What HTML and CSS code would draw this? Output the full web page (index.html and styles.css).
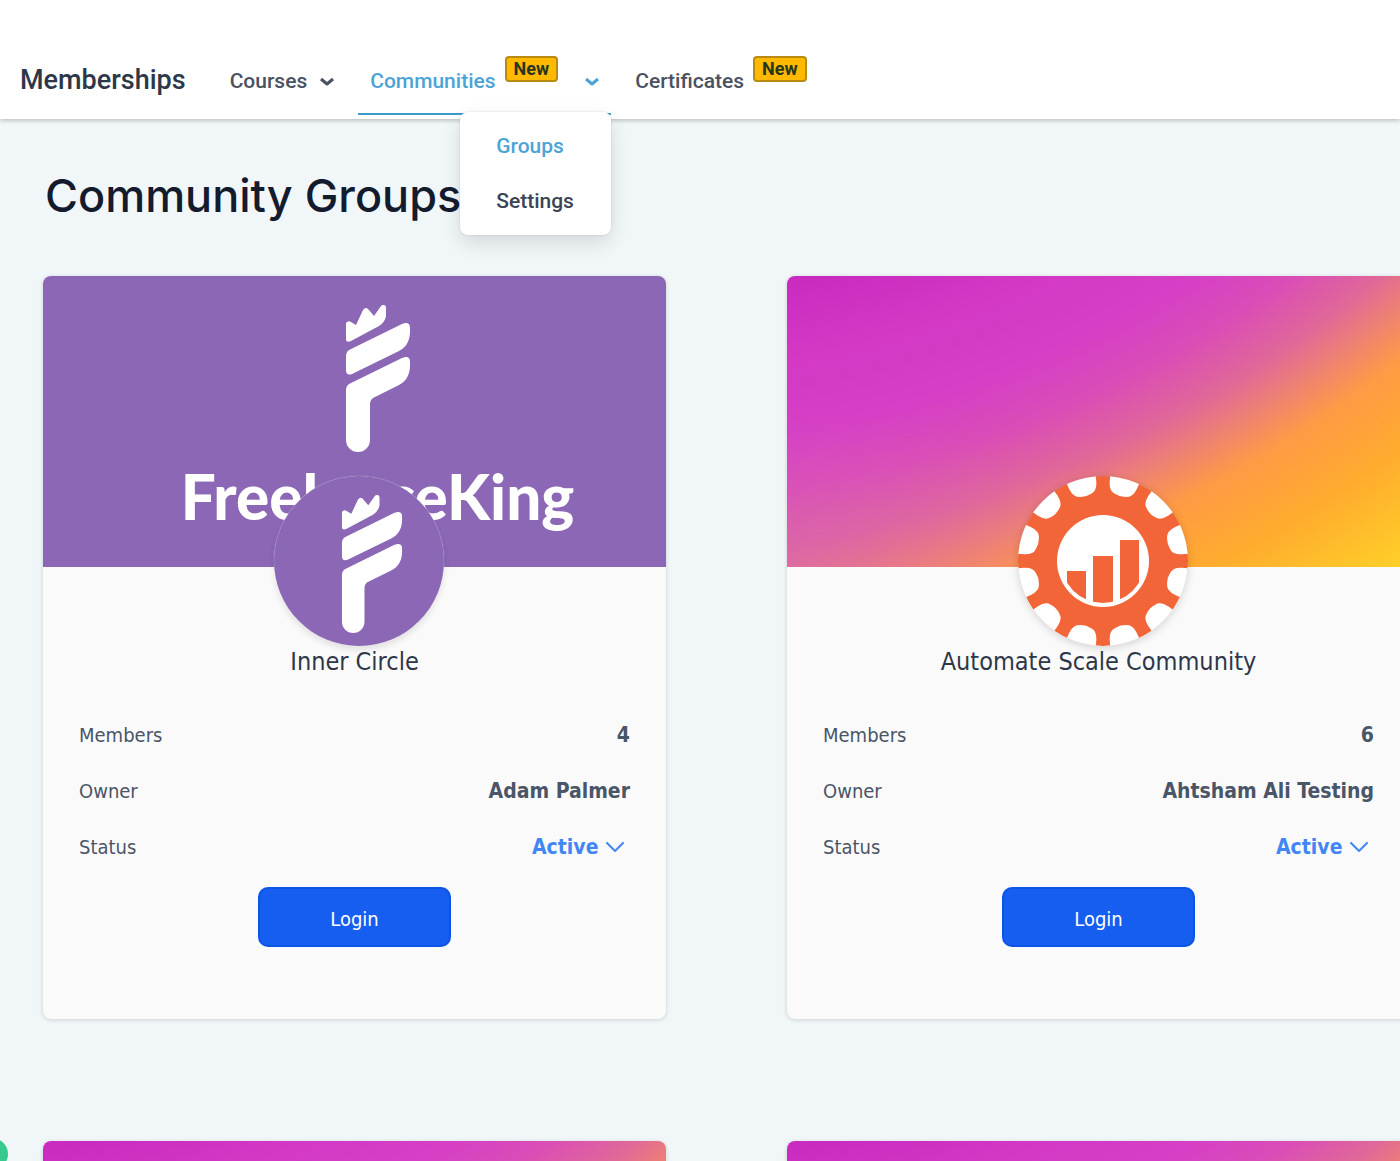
FILE: index.html
```html
<!DOCTYPE html>
<html lang="en">
<head>
<meta charset="utf-8">
<title>Community Groups</title>
<meta name="viewport" content="width=device-width, initial-scale=1">
<link rel="stylesheet" href="styles.css">
</head>
<body>
<svg class="defs" width="0" height="0" aria-hidden="true">
  <symbol id="torch" viewBox="0 0 66 148">
    <path d="M1 18Q3 15 6 17L11 20L18 5Q21 1 24 5L29 11L36 1Q39 -2 41 2V11Q40 17 34 21L6 36Q1 38 1 34Z"/>
    <path d="M1 50Q1 47 4 45L57 19Q65 16 65 23Q66 40 54 46L7 69Q1 71 1 65Z"/>
    <path d="M1 84Q1 81 4 79L57 53Q65 50 65 57Q66 74 54 80L28 93Q25 95 25 98V135A12 12 0 0 1 1 135Z"/>
  </symbol>
  <symbol id="chevron-solid" viewBox="0 0 14 9">
    <path d="M1 2L7 7L13 2" fill="none" stroke="currentColor" stroke-width="3" stroke-linejoin="round"/>
  </symbol>
  <symbol id="chevron-thin" viewBox="0 0 18 11">
    <path d="M1 1L9 9L17 1" fill="none" stroke="currentColor" stroke-width="2" stroke-linecap="round" stroke-linejoin="round"/>
  </symbol>
</svg>

<header class="topbar">
  <a class="brand" href="#">Memberships</a>
  <nav class="nav">
    <a class="nav-item" href="#">Courses
      <svg class="nav-chevron" aria-hidden="true"><use href="#chevron-solid"/></svg>
    </a>
    <div class="nav-group">
      <a class="nav-item nav-item-active" href="#">Communities
        <span class="badge">New</span>
        <svg class="nav-chevron nav-chevron-far" aria-hidden="true"><use href="#chevron-solid"/></svg>
      </a>
      <div class="menu">
        <a class="menu-link menu-link-active" href="#">Groups</a>
        <a class="menu-link" href="#">Settings</a>
      </div>
    </div>
    <a class="nav-item" href="#">Certificates
      <span class="badge">New</span>
    </a>
  </nav>
</header>

<main class="page">
  <h1 class="title">Community Groups</h1>
  <div class="grid">
    <article class="card">
      <div class="banner banner-purple">
        <svg class="banner-mark" aria-hidden="true"><use href="#torch"/></svg>
        <span class="banner-name">FreelanceKing</span>
      </div>
      <div class="avatar avatar-purple">
        <svg class="avatar-mark" aria-hidden="true"><use href="#torch"/></svg>
      </div>
      <div class="card-body">
        <h2 class="card-title">Inner Circle</h2>
        <dl class="facts">
          <div class="fact"><dt>Members</dt><dd>4</dd></div>
          <div class="fact"><dt>Owner</dt><dd>Adam Palmer</dd></div>
          <div class="fact">
            <dt><label for="status-1">Status</label></dt>
            <dd class="status">
              <select id="status-1" class="status-select"><option>Active</option></select>
              <svg class="status-chevron" aria-hidden="true"><use href="#chevron-thin"/></svg>
            </dd>
          </div>
        </dl>
        <button class="login" type="button">Login</button>
      </div>
    </article>

    <article class="card">
      <div class="banner banner-sunset"></div>
      <div class="avatar">
        <svg class="gear" viewBox="-85 -85 170 170" aria-hidden="true">
          <defs>
            <path id="notch" d="M-16 -90L-14 -78Q-12 -69 -6 -68Q0 -66 6 -68Q12 -69 14 -78L16 -90Z"/>
            <clipPath id="dial"><circle r="42"/></clipPath>
          </defs>
          <circle r="85" fill="#f26538"/>
          <g fill="#fff">
            <use href="#notch" transform="rotate(15)"/><use href="#notch" transform="rotate(45)"/>
            <use href="#notch" transform="rotate(75)"/><use href="#notch" transform="rotate(105)"/>
            <use href="#notch" transform="rotate(135)"/><use href="#notch" transform="rotate(165)"/>
            <use href="#notch" transform="rotate(195)"/><use href="#notch" transform="rotate(225)"/>
            <use href="#notch" transform="rotate(255)"/><use href="#notch" transform="rotate(285)"/>
            <use href="#notch" transform="rotate(315)"/><use href="#notch" transform="rotate(345)"/>
            <circle r="46"/>
          </g>
          <g fill="#f26538" clip-path="url(#dial)">
            <path d="M-36 10H-17V50H-36ZM-10 -5H10V50H-10ZM17 -21H36V50H17Z"/>
          </g>
        </svg>
      </div>
      <div class="card-body">
        <h2 class="card-title">Automate Scale Community</h2>
        <dl class="facts">
          <div class="fact"><dt>Members</dt><dd>6</dd></div>
          <div class="fact"><dt>Owner</dt><dd>Ahtsham Ali Testing</dd></div>
          <div class="fact">
            <dt><label for="status-2">Status</label></dt>
            <dd class="status">
              <select id="status-2" class="status-select"><option>Active</option></select>
              <svg class="status-chevron" aria-hidden="true"><use href="#chevron-thin"/></svg>
            </dd>
          </div>
        </dl>
        <button class="login" type="button">Login</button>
      </div>
    </article>

    <article class="card"><div class="banner banner-sunset"></div></article>
    <article class="card"><div class="banner banner-sunset"></div></article>
  </div>
</main>
<button class="chat" type="button" aria-label="Help"></button>
</body>
</html>
```

FILE: styles.css
```css
* { box-sizing: border-box; }

html, body { height: 100%; }

body {
  margin: 0;
  display: flex;
  flex-direction: column;
  overflow: hidden;
  background: #f1f6f9;
  color: #2d3748;
  font-family: "DejaVu Sans Condensed", Tahoma, sans-serif;
}

a { color: inherit; text-decoration: none; }

.defs { position: absolute; }

/* Top bar */
.topbar {
  position: relative;
  z-index: 2;
  flex: none;
  display: flex;
  align-items: stretch;
  gap: 32px;
  padding: 45px 20px 4px;
  background: #fff;
  box-shadow: 0 2px 4px rgba(0, 0, 0, 0.2);
  font-family: Roboto, sans-serif;
  font-weight: 500;
}

.brand {
  font-size: 27px;
  line-height: 70px;
}

.nav { display: flex; gap: 12px; }

.nav-group { position: relative; }

.nav-item {
  display: flex;
  align-items: center;
  height: 70px;
  padding: 4px 12px 0;
  border-bottom: 2px solid transparent;
  color: #4a5160;
  font-size: 21px;
}

.nav-item-active {
  border-color: #3f9bcd;
  color: #4ba3d8;
}

.nav-chevron {
  width: 14px;
  height: 9px;
  margin-left: 13px;
}

.nav-chevron-far { margin-left: 27px; }

.badge {
  margin: 0 0 24px 9px;
  padding: 0 7px;
  border: 2px solid #b88a10;
  border-radius: 4px;
  background: #ffb900;
  color: #26371f;
  font-size: 18px;
  font-weight: 700;
  line-height: 22px;
}

.menu {
  position: absolute;
  top: 67px;
  right: 0;
  display: grid;
  gap: 31px;
  width: 151px;
  padding: 22px 36px;
  border-radius: 8px;
  background: #fff;
  box-shadow: 0 0 2px rgba(0, 0, 0, 0.15), 0 8px 20px rgba(0, 0, 0, 0.12);
  color: #3b4454;
  font-size: 21px;
  line-height: 24px;
}

.menu-link-active { color: #4ba3d8; }

/* Page */
.page {
  flex: 1;
  min-height: 0;
  padding: 47px 0 0 43px;
}

.title {
  margin: 0 0 50px 2px;
  color: #141b2d;
  font-family: Inter, sans-serif;
  font-size: 45px;
  font-weight: 500;
  line-height: 60px;
}

.grid {
  display: grid;
  grid-template-columns: 1fr 1fr;
  gap: 122px 121px;
  margin-right: -10px;
}

.card {
  position: relative;
  border-radius: 8px;
  background: #fafafa;
  box-shadow: 0 1px 4px rgba(0, 0, 0, 0.16);
}

.banner {
  display: flex;
  flex-direction: column;
  align-items: center;
  height: 291px;
  padding: 29px 0 0 46px;
  border-radius: 8px 8px 0 0;
}

.banner-purple { background: #8b67b5; }

.banner-sunset {
  background:
    radial-gradient(ellipse 320px 160px at 0 290px, rgba(214, 94, 190, 0.5), rgba(214, 94, 190, 0)),
    radial-gradient(circle at -170px -900px,
      #c828bf 905px, #d238c4 990px, #d63fc6 1070px, #da4db6 1125px,
      #e06898 1180px, #ee8272 1217px, #ff9a45 1258px, #ffac2e 1330px, #ffd228 1430px);
}

.banner-mark {
  width: 66px;
  height: 148px;
  fill: #fff;
}

.banner-name {
  color: #fff;
  font-family: Lato, sans-serif;
  font-size: 62px;
  font-weight: 900;
  line-height: 86px;
}

.avatar {
  position: absolute;
  top: 200px;
  left: 50%;
  width: 170px;
  height: 170px;
  margin-left: -81px;
  display: flex;
  align-items: center;
  justify-content: center;
  overflow: hidden;
  border-radius: 50%;
  box-shadow: 0 2px 8px rgba(0, 0, 0, 0.16);
}

.avatar-purple {
  padding: 6px 0 0 26px;
  background: #8b67b5;
  box-shadow: 0 0 1px rgba(255, 255, 255, 0.9), 0 4px 6px rgba(0, 0, 0, 0.1);
}

.avatar-mark {
  width: 62px;
  height: 139px;
  fill: #fff;
}

.gear { width: 170px; height: 170px; }

.card-body {
  display: flex;
  flex-direction: column;
  align-items: center;
  padding: 78px 36px 72px;
}

.card-title {
  margin: 0 0 41px;
  font-size: 25px;
  font-weight: 400;
  line-height: 34px;
}

.facts {
  display: grid;
  gap: 26px;
  width: 100%;
  margin: 0 0 25px;
  color: #4a5568;
  font-size: 20px;
  line-height: 30px;
}

.fact { display: flex; justify-content: space-between; }

.fact dd {
  margin: 0;
  font-size: 21px;
  font-weight: 700;
}

.status {
  display: flex;
  align-items: center;
  gap: 7px;
  padding-right: 6px;
  color: #4285f4;
}

.status-select {
  appearance: none;
  padding: 0;
  border: 0;
  background: none;
  color: inherit;
  font: inherit;
}

.status-chevron { width: 18px; height: 11px; }

.login {
  width: 193px;
  height: 60px;
  padding: 4px 0 0;
  border: 2px solid #0c53e8;
  border-radius: 10px;
  background: #155eef;
  color: #fff;
  font-family: inherit;
  font-size: 20px;
}

.chat {
  position: fixed;
  bottom: -9px;
  left: -24px;
  width: 32px;
  height: 32px;
  padding: 0;
  border: 0;
  border-radius: 50%;
  background: #37ca8e;
}
```
